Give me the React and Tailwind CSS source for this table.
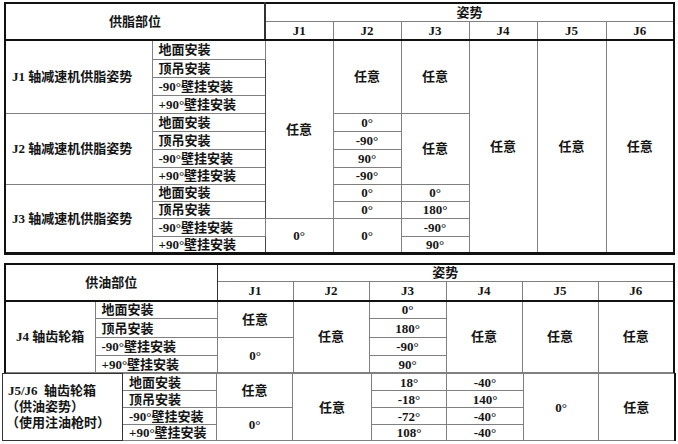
import React from 'react';

const cell = 'border border-[#808080] text-center align-middle p-0 leading-none';
const inst = 'border border-[#808080] text-left align-middle pl-[6px] p-0 leading-none';
const head = 'border border-[#808080] text-center align-middle p-0 leading-none font-bold';

const mounts = ['地面安装', '顶吊安装', '-90°壁挂安装', '+90°壁挂安装'];

const TableOne = () => (
  <table className="table-fixed border-collapse border-2 border-b-[3px] border-[#111] w-[669px]">
    <colgroup>
      <col className="w-[147px]" />
      <col className="w-[113px]" />
      <col className="w-[68px]" />
      <col className="w-[68px]" />
      <col className="w-[68px]" />
      <col className="w-[68px]" />
      <col className="w-[69px]" />
      <col className="w-[68px]" />
    </colgroup>
    <thead>
      <tr className="h-[18px]">
        <th colSpan={2} rowSpan={2} className={`${head} border-r-2 border-r-[#333] border-b-2 border-b-[#111]`}>供脂部位</th>
        <th colSpan={6} className={head}>姿势</th>
      </tr>
      <tr className="h-[19px]">
        {['J1', 'J2', 'J3', 'J4', 'J5', 'J6'].map((j) => (
          <th key={j} className={`${head} border-b-2 border-b-[#111]`}>{j}</th>
        ))}
      </tr>
    </thead>
    <tbody>
      <tr className="h-[19px]">
        <td rowSpan={4} className={`${inst} pl-[4px]`}>J1 轴减速机供脂姿势</td>
        <td className={inst}>{mounts[0]}</td>
        <td rowSpan={10} className={`${cell} border-l-[#444]`}>任意</td>
        <td rowSpan={4} className={cell}>任意</td>
        <td rowSpan={4} className={cell}>任意</td>
        <td rowSpan={12} className={cell}>任意</td>
        <td rowSpan={12} className={cell}>任意</td>
        <td rowSpan={12} className={cell}>任意</td>
      </tr>
      <tr className="h-[18px]"><td className={inst}>{mounts[1]}</td></tr>
      <tr className="h-[18px]"><td className={inst}>{mounts[2]}</td></tr>
      <tr className="h-[18px]"><td className={inst}>{mounts[3]}</td></tr>

      <tr className="h-[18px]">
        <td rowSpan={4} className={`${inst} pl-[4px]`}>J2 轴减速机供脂姿势</td>
        <td className={inst}>{mounts[0]}</td>
        <td className={cell}>0°</td>
        <td rowSpan={4} className={cell}>任意</td>
      </tr>
      <tr className="h-[18px]"><td className={inst}>{mounts[1]}</td><td className={cell}>-90°</td></tr>
      <tr className="h-[18px]"><td className={inst}>{mounts[2]}</td><td className={cell}>90°</td></tr>
      <tr className="h-[17px]"><td className={inst}>{mounts[3]}</td><td className={cell}>-90°</td></tr>

      <tr className="h-[17px]">
        <td rowSpan={4} className={`${inst} pl-[4px]`}>J3 轴减速机供脂姿势</td>
        <td className={inst}>{mounts[0]}</td>
        <td className={cell}>0°</td>
        <td className={cell}>0°</td>
      </tr>
      <tr className="h-[17px]"><td className={inst}>{mounts[1]}</td><td className={cell}>0°</td><td className={cell}>180°</td></tr>
      <tr className="h-[18px]">
        <td className={inst}>{mounts[2]}</td>
        <td rowSpan={2} className={`${cell} border-l-[#444]`}>0°</td>
        <td rowSpan={2} className={cell}>0°</td>
        <td className={cell}>-90°</td>
      </tr>
      <tr className="h-[17px]"><td className={inst}>{mounts[3]}</td><td className={cell}>90°</td></tr>
    </tbody>
  </table>
);

const TableTwo = () => (
  <table className="table-fixed border-collapse border-2 border-[#111] border-b border-b-[#333] w-[669px]">
    <colgroup>
      <col className="w-[90px]" />
      <col className="w-[122px]" />
      <col className="w-[76px]" />
      <col className="w-[76px]" />
      <col className="w-[77px]" />
      <col className="w-[76px]" />
      <col className="w-[76px]" />
      <col className="w-[76px]" />
    </colgroup>
    <thead>
      <tr className="h-[18px]">
        <th colSpan={2} rowSpan={2} className={`${head} border-r-[#333] border-b-2 border-b-[#111]`}>供油部位</th>
        <th colSpan={6} className={head}>姿势</th>
      </tr>
      <tr className="h-[19px]">
        {['J1', 'J2', 'J3', 'J4', 'J5', 'J6'].map((j) => (
          <th key={j} className={`${head} border-b-2 border-b-[#111]`}>{j}</th>
        ))}
      </tr>
    </thead>
    <tbody>
      <tr className="h-[18px]">
        <td rowSpan={4} className={cell}>J4 轴齿轮箱</td>
        <td className={inst}>{mounts[0]}</td>
        <td rowSpan={2} className={cell}>任意</td>
        <td rowSpan={4} className={cell}>任意</td>
        <td className={cell}>0°</td>
        <td rowSpan={4} className={cell}>任意</td>
        <td rowSpan={4} className={cell}>任意</td>
        <td rowSpan={4} className={cell}>任意</td>
      </tr>
      <tr className="h-[19px]"><td className={inst}>{mounts[1]}</td><td className={cell}>180°</td></tr>
      <tr className="h-[18px]">
        <td className={inst}>{mounts[2]}</td>
        <td rowSpan={2} className={cell}>0°</td>
        <td className={cell}>-90°</td>
      </tr>
      <tr className="h-[17px]"><td className={inst}>{mounts[3]}</td><td className={cell}>90°</td></tr>
    </tbody>
  </table>
);

const TableThree = () => (
  <table className="table-fixed border-collapse border border-[#333] border-t-0 border-r-2 border-r-[#111] w-[672px]">
    <colgroup>
      <col className="w-[120px]" />
      <col className="w-[94px]" />
      <col className="w-[76px]" />
      <col className="w-[79px]" />
      <col className="w-[75px]" />
      <col className="w-[77px]" />
      <col className="w-[75px]" />
      <col className="w-[76px]" />
    </colgroup>
    <tbody>
      <tr className="h-[17px]">
        <td rowSpan={4} className="border border-[#333] align-middle text-left pl-[5px] leading-[16px] font-bold">
          <div>J5/J6&nbsp;&nbsp;轴齿轮箱</div>
          <div className="-ml-[2px]">（供油姿势）</div>
          <div className="-ml-[2px]">（使用注油枪时）</div>
        </td>
        <td className={`${inst} border-[#444]`}>{mounts[0]}</td>
        <td rowSpan={2} className={cell}>任意</td>
        <td rowSpan={4} className={cell}>任意</td>
        <td className={cell}>18°</td>
        <td className={cell}>-40°</td>
        <td rowSpan={4} className={cell}>0°</td>
        <td rowSpan={4} className={cell}>任意</td>
      </tr>
      <tr className="h-[17px]"><td className={`${inst} border-[#444]`}>{mounts[1]}</td><td className={cell}>-18°</td><td className={cell}>140°</td></tr>
      <tr className="h-[17px]">
        <td className={`${inst} border-[#444]`}>{mounts[2]}</td>
        <td rowSpan={2} className={cell}>0°</td>
        <td className={cell}>-72°</td>
        <td className={cell}>-40°</td>
      </tr>
      <tr className="h-[16px]"><td className={`${inst} border-[#444]`}>{mounts[3]}</td><td className={cell}>108°</td><td className={cell}>-40°</td></tr>
    </tbody>
  </table>
);

export default function App() {
  return (
    <div className="w-[678px] h-[444px] bg-white overflow-hidden text-[#151515] font-bold text-[13px] font-['Liberation_Serif','Noto_Sans_CJK_SC',serif]">
      <div className="pt-[2px] pl-[4px]">
        <TableOne />
      </div>
      <div className="mt-[8px] pl-[4px]">
        <TableTwo />
      </div>
      <div className="pl-[2px]">
        <TableThree />
      </div>
    </div>
  );
}
